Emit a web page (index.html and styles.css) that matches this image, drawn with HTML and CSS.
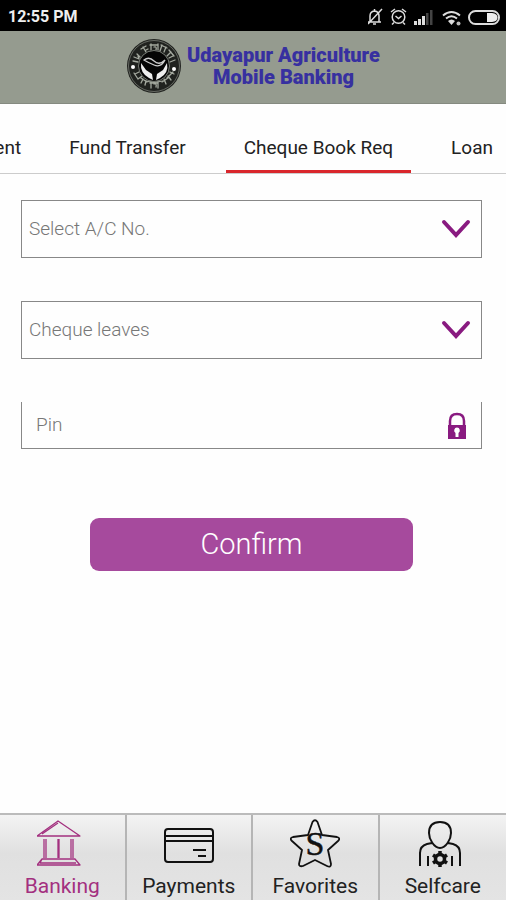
FILE: index.html
```html
<!DOCTYPE html>
<html lang="en">
<head>
<meta charset="UTF-8">
<meta name="viewport" content="width=device-width, initial-scale=1.0">
<title>Udayapur Agriculture Mobile Banking</title>
<link rel="stylesheet" href="styles.css">
</head>
<body>

<!-- Status bar -->
<div class="status-bar">
    <span class="time">12:55 PM</span>
    <svg class="status-icons" viewBox="0 0 134 20" width="134" height="20" fill="none" stroke="#ddd" stroke-width="1.5">
        <path d="M0 15H13M2 14.500V9q0-4.500 4.500-5 4.500 .5 4.500 5v5.500M6.500 4V2M5 17h3M0 17L14 2"/>
        <circle cx="30.500" cy="10" r="6.300"/>
        <path d="M27.500 9l3 2.500 3-2.500M23 5l4-3M34 2l4 3M26 15.500l-2 2M35 15.500l2 2"/>
        <g stroke="none" fill="#ddd">
            <path d="M46 14h3v4h-3zM50 12h3v6h-3zM54 9h3v9h-3z"/>
            <path d="M58 6h2.500v12H58zM62 3h2.500v15H62z" fill="#444"/>
        </g>
        <path d="M75 8.500q8.500-7 17 0M78 11.500q5.500-4.500 11 0" stroke-width="2"/>
        <path d="M80 14q3.500-3 7 0l-3.500 4z" fill="#ddd" stroke="none"/>
        <circle cx="90.500" cy="16.500" r="2" fill="#bbb" stroke="none"/>
        <rect x="101" y="4" width="30" height="13" rx="6.500" stroke-width="2"/>
        <path d="M119 6h5q5.500 .5 5.500 4.500t-5.500 4.500h-5z" fill="#eee" stroke="none"/>
    </svg>
</div>

<header class="header">
    <svg class="logo" viewBox="0 0 56 56" width="56" height="56" fill="none">
        <circle cx="28" cy="28" r="27" fill="#20221f"/>
        <circle cx="28" cy="28" r="25.500" stroke="#777b74" stroke-width=".8"/>
        <!-- lettering ring -->
        <g stroke="#a4a99f" stroke-width="1.300" stroke-linecap="round" stroke-linejoin="round">
            <path d="M7 23l5 1M8 19l5 2-1-3M11 16l3 3M17 9l3 5M15 11l5-3M20 12l2-1M25 6v6M24 7h8M28 9q3-1 2 3M32 6v6M36 7l-2 6M35 7l6 3M40 9l-2 5M45 14l-4 4M43 12l5 6M47 18l-4 2M49 22l-5 2"/>
            <path d="M9 36l4-2M8 35l4 6M12 41l4-3M17 41l-2 4M15 40l6 4M20 43l-1 4M25 44v6M24 45h8M28 46q3-1 2 3M32 44v6M38 41l2 5M36 44l6-4M42 38l3 4M41 40l6-6M44 34l4 2"/>
        </g>
        <circle cx="28" cy="28" r="15.500" fill="#050505" stroke="#777b74"/>
        <circle cx="7" cy="29" r="2" fill="#fff"/>
        <circle cx="48" cy="31" r="2" fill="#fff"/>
        <!-- hands and leaf -->
        <path d="M15 25q-1 10 8 15l4 2-1-6-6-4z" fill="#eee"/>
        <path d="M41 25q2 10-7 15l-4 2 1-6 6-4z" fill="#eee"/>
        <path d="M18 22q5-4 10 1t11-1q-4 8-11 5t-10-5z" stroke="#ccc" stroke-width="1.300"/>
        <path d="M19 43q9 3 18 0" stroke="#a4a99f"/>
    </svg>
    <h1 class="brand">Udayapur Agriculture<br>Mobile Banking</h1>
</header>

<nav class="tabs">
    <a class="tab" href="#">Payment</a>
    <a class="tab" href="#">Fund Transfer</a>
    <a class="tab active" href="#">Cheque Book Req</a>
    <a class="tab" href="#">Loan</a>
</nav>

<main class="main">
    <form class="form">
        <div class="field">
            <select class="input" aria-label="Select A/C No.">
                <option>Select A/C No.</option>
            </select>
            <svg class="field-icon" viewBox="0 0 30 20" width="30" height="20" fill="none" stroke="#891a80" stroke-width="4" stroke-linecap="round"><path d="M3 3l12 13L27 3"/></svg>
        </div>
        <div class="field">
            <select class="input" aria-label="Cheque leaves">
                <option>Cheque leaves</option>
            </select>
            <svg class="field-icon" viewBox="0 0 30 20" width="30" height="20" fill="none" stroke="#891a80" stroke-width="4" stroke-linecap="round"><path d="M3 3l12 13L27 3"/></svg>
        </div>
        <div class="field">
            <input class="input pin" type="password" placeholder="Pin" aria-label="Pin">
            <svg class="field-icon" viewBox="0 0 30 28" width="30" height="28">
                <path d="M9 14V9q0-7 7-7t7 7v5" fill="none" stroke="#891a80" stroke-width="2.500"/>
                <path d="M7 13h18v14H7z" fill="#891a80"/>
                <path d="M16 15.500a3 3 0 0 1 1.500 5.500v4h-3v-4A3 3 0 0 1 16 15.500z" fill="#fff"/>
            </svg>
        </div>
        <button class="confirm" type="button">Confirm</button>
    </form>
</main>

<!-- Bottom navigation -->
<nav class="bottom-nav">
    <a class="nav-item selected" href="#">
        <svg viewBox="0 0 50 50" width="50" height="50" fill="none" stroke="#a3307f" stroke-width="1.300" stroke-linejoin="round">
            <path d="M0 18L21 3l22 15zM5 16L21 5M7 21v19M9 21v19M21 21v19M22 21v19M34 21v19M36 21v19M5 41h33l5 6H0zM5 41l-2 4h36"/>
        </svg>
        <span>Banking</span>
    </a>
    <a class="nav-item" href="#">
        <svg viewBox="0 0 50 50" width="50" height="50" fill="none" stroke="#111" stroke-width="2">
            <rect x="1" y="11" width="48" height="33" rx="3"/>
            <path d="M1 18h48M1 23h48M29 32h13M34 38h8"/>
        </svg>
        <span>Payments</span>
    </a>
    <a class="nav-item" href="#">
        <svg viewBox="0 0 50 50" width="50" height="50" fill="none" stroke="#111" stroke-width="1.800" stroke-linejoin="round">
            <path d="M22.500 4Q25 .5 27.500 4L32 17l15 2q4 1 1 4L38 32l3 14q0 4-4 2L25 42l-12 6q-4 1-4-2l3-14L2 23q-3-3 1-4l15-2z"/>
            <text class="star-letter" x="25" y="37" text-anchor="middle">S</text>
        </svg>
        <span>Favorites</span>
    </a>
    <a class="nav-item" href="#">
        <svg viewBox="0 0 50 50" width="50" height="50" fill="none" stroke="#111" stroke-width="2">
            <path d="M22 4c8 0 11 5 11 11s-5 15-11 15-11-9-11-15S14 4 22 4zM14 25l-5 1q-7 2-7 9v13M30 25l5 1q7 2 7 9v13M10 38v10M34 38v10"/>
            <circle cx="22" cy="41" r="4.500" stroke-width="3.500"/>
            <path d="M22 33v4M22 45v4M15 37l3 2M26 43l3 2M29 37l-3 2M18 43l-3 2" stroke-width="3.500"/>
        </svg>
        <span>Selfcare</span>
    </a>
</nav>

</body>
</html>
```
FILE: styles.css
```css
* {
    box-sizing: border-box;
}
body {
    margin: 0;
    min-height: 100vh;
    display: flex;
    flex-direction: column;
    font-family: Roboto, "Liberation Sans", sans-serif;
    background-color: #fefefe;
    color: #222;
}
a {
    color: inherit;
    text-decoration: none;
}

/* Status bar */
.status-bar {
    height: 31px;
    padding: 2px 4px 0 8px;
    display: flex;
    align-items: center;
    justify-content: space-between;
    background-color: #000;
    color: #eee;
}
.time {
    font-size: 16px;
    font-weight: 700;
}

/* Header */
.header {
    height: 73px;
    padding-bottom: 2px;
    display: flex;
    align-items: center;
    justify-content: center;
    gap: 5px;
    background-color: #959b8f;
    border-bottom: 1px solid #858a80;
}
.brand {
    margin: 0;
    font-size: 20px;
    line-height: 22px;
    font-weight: 900;
    text-align: center;
    color: #3730a0;
}

/* Tabs, scrolled towards the end */
.tabs {
    height: 70px;
    display: flex;
    justify-content: flex-end;
    gap: 22px;
    overflow: hidden;
    border-bottom: 1px solid #ccc;
}
.tab {
    padding: 32px 18px 0;
    font-size: 19px;
    line-height: 24px;
    white-space: nowrap;
}
.tab:first-child {
    padding-right: 8px;
}
.tab:last-child {
    padding-right: 13px;
}
.tab.active {
    border-bottom: 3px solid #d9262b;
}

/* Form */
.main {
    flex: 1;
    padding: 26px 24px 24px 21px;
}
.form {
    display: flex;
    flex-direction: column;
    gap: 43px;
}
.field {
    position: relative;
}
.input {
    display: block;
    width: 100%;
    height: 58px;
    padding: 0 50px 2px 7px;
    border: 1px solid #888;
    border-radius: 0;
    appearance: none;
    background-color: transparent;
    font-family: inherit;
    font-size: 19px;
    font-weight: 300;
    color: #777;
}
.input.pin {
    height: 47px;
    padding-left: 14px;
    border-top: none;
}
.input::placeholder {
    color: #777;
}
.field-icon {
    position: absolute;
    top: 0;
    bottom: 0;
    right: 11px;
    margin: auto 0;
    pointer-events: none;
}
.confirm {
    width: 70%;
    height: 53px;
    margin: 26px auto 0;
    padding: 0 0 2px;
    border: none;
    border-radius: 9px;
    background-color: #a64a9d;
    color: #fff;
    font-family: inherit;
    font-size: 29px;
    font-weight: 300;
    cursor: pointer;
}

/* Bottom navigation */
.bottom-nav {
    height: 87px;
    display: grid;
    grid-template-columns: repeat(4, 1fr);
    border-top: 2px solid #bbb;
    background: linear-gradient(#f3f3f3, #e0e0e0 45%, #e4e4e4);
}
.nav-item {
    padding-top: 3px;
    display: flex;
    flex-direction: column;
    align-items: center;
    gap: 6px;
    border-right: 2px solid #b5b5b5;
    font-size: 21px;
    line-height: 24px;
}
.nav-item:last-child {
    border-right: none;
}
.nav-item.selected {
    color: #a3307f;
}
.star-letter {
    font-family: "Liberation Serif", serif;
    font-size: 34px;
    font-weight: normal;
    fill: #111;
    stroke: #111;
    stroke-width: 0.5;
}
```
